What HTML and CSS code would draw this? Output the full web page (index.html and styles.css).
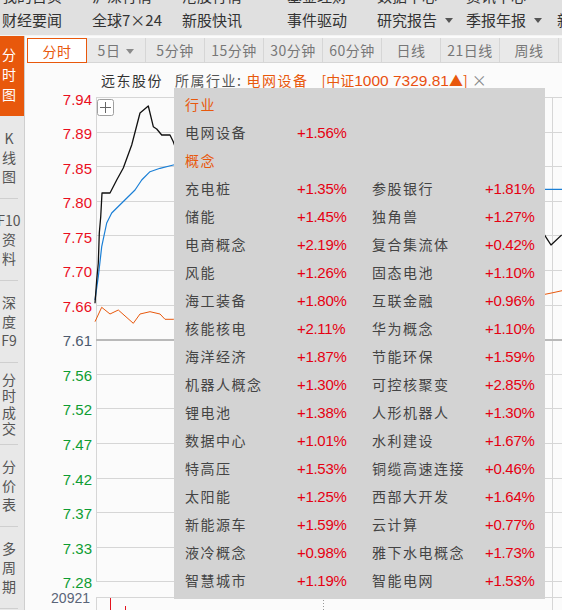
FILE: index.html
```html
<!DOCTYPE html>
<html lang="zh-CN">
<head>
<meta charset="utf-8">
<title>远东股份 分时图</title>
<link rel="stylesheet" href="styles.css">
</head>
<body>
<div class="app">
  <header class="topbar">
    <div class="toprow clipped">
      <span class="ti w90">我的首页</span>
      <span class="ti w90">沪深行情</span>
      <span class="ti w105">港股行情</span>
      <span class="ti w90">基金理财</span>
      <span class="ti w89">数据中心</span>
      <span class="ti w91">资讯中心</span>
      <span class="ti">个股</span>
    </div>
    <div class="toprow">
      <span class="ti w90">财经要闻</span>
      <span class="ti w90">全球7×24</span>
      <span class="ti w105">新股快讯</span>
      <span class="ti w90">事件驱动</span>
      <span class="ti w89">研究报告<i class="caret"></i></span>
      <span class="ti w91">季报年报<i class="caret"></i></span>
      <span class="ti">新闻</span>
    </div>
  </header>

  <div class="body">
    <nav class="side">
      <div class="sec active"><span>分</span><span>时</span><span>图</span></div>
      <div class="sec"><span>K</span><span>线</span><span>图</span></div>
      <div class="sec"><span>F10</span><span>资</span><span>料</span></div>
      <div class="sec"><span>深</span><span>度</span><span>F9</span></div>
      <div class="sec tight"><span>分</span><span>时</span><span>成</span><span>交</span></div>
      <div class="sec"><span>分</span><span>价</span><span>表</span></div>
      <div class="sec"><span>多</span><span>周</span><span>期</span></div>
    </nav>

    <main class="main">
      <div class="tabs">
        <div class="tab on">分时</div>
        <div class="tab">5日<i class="caret grey"></i></div>
        <div class="tab">5分钟</div>
        <div class="tab">15分钟</div>
        <div class="tab">30分钟</div>
        <div class="tab">60分钟</div>
        <div class="tab">日线</div>
        <div class="tab">21日线</div>
        <div class="tab">周线</div>
        <div class="tab">月线</div>
      </div>

      <div class="stockline">
        <span class="sname">远东股份</span><span class="lbl">所属行业:</span><span class="ind">电网设备</span><span class="idx">[中证<span class="num">1000 7329.81</span>▲]</span><span class="close">×</span>
      </div>

      <svg class="chart" width="537" height="516" viewBox="0 0 537 516">
        <g class="grid">
          <line x1="71" y1="3.5" x2="537" y2="3.5"/>
          <line x1="71" y1="38.5" x2="537" y2="38.5"/>
          <line x1="71" y1="72.5" x2="537" y2="72.5"/>
          <line x1="71" y1="107.5" x2="537" y2="107.5"/>
          <line x1="71" y1="141.5" x2="537" y2="141.5"/>
          <line x1="71" y1="176.5" x2="537" y2="176.5"/>
          <line x1="71" y1="211.5" x2="537" y2="211.5"/>
          <line x1="71" y1="280.5" x2="537" y2="280.5"/>
          <line x1="71" y1="314.5" x2="537" y2="314.5"/>
          <line x1="71" y1="349.5" x2="537" y2="349.5"/>
          <line x1="71" y1="384.5" x2="537" y2="384.5"/>
          <line x1="71" y1="418.5" x2="537" y2="418.5"/>
          <line x1="71" y1="453.5" x2="537" y2="453.5"/>
          <line x1="71" y1="487.5" x2="537" y2="487.5"/>
          <line x1="71" y1="503.5" x2="537" y2="503.5"/>
          <line x1="71.5" y1="3.5" x2="71.5" y2="487.5"/>
          <line x1="71.5" y1="503.5" x2="71.5" y2="516"/>
          <line x1="527.5" y1="3.5" x2="527.5" y2="516"/>
        </g>
        <line class="zero" x1="71" y1="246" x2="537" y2="246"/>
        <line class="dotted" x1="298.5" y1="506" x2="298.5" y2="516"/>

        <g class="ylab">
          <text class="up" x="67" y="11">7.94</text>
          <text class="up" x="67" y="45">7.89</text>
          <text class="up" x="67" y="80">7.85</text>
          <text class="up" x="67" y="114">7.80</text>
          <text class="up" x="67" y="149">7.75</text>
          <text class="up" x="67" y="183">7.70</text>
          <text class="up" x="67" y="218">7.66</text>
          <text class="flat" x="67" y="252">7.61</text>
          <text class="down" x="67" y="287">7.56</text>
          <text class="down" x="67" y="321">7.52</text>
          <text class="down" x="67" y="356">7.47</text>
          <text class="down" x="67" y="391">7.42</text>
          <text class="down" x="67" y="425">7.37</text>
          <text class="down" x="67" y="460">7.33</text>
          <text class="down" x="67" y="494">7.28</text>
          <text class="vol" x="65" y="509">20921</text>
        </g>

        <polyline class="ratio" points="70,227.7 76.7,213.3 85,220 93.3,216 108.3,229.3 115,220 125,217.7 135,220 140,225.3 148.3,225.3 160,224 200,222 260,218 330,212 400,206 470,203 520,200.3 528,198.7 537,196.7"/>
        <polyline class="avg" points="70,206 73.3,182.7 76.7,152.7 81.7,129 86.7,119 110,96 116.7,86 125,77.7 135,74.3 148.3,71 160,69 220,72 300,80 400,88 470,93 520,95.3 537,95.3"/>
        <polyline class="price" points="70,209.3 71.7,186 73.3,169 74.3,139 75.7,123 77,99 85,99 91.7,86 98.3,74 106.7,51 115,19 123.3,12 128.3,32.7 131.7,35 136.7,41 145,41 148.3,47.7 152,58 200,90 300,120 400,130 480,135 519,140 521.7,144.3 526,151 536.7,141"/>

        <line class="bar" x1="85.5" y1="504" x2="85.5" y2="516"/>
        <line class="bar" x1="100.5" y1="512" x2="100.5" y2="516"/>

        <g class="zoombtn">
          <rect x="72.5" y="5.5" width="16" height="16" rx="2"/>
          <line x1="75" y1="13.5" x2="86" y2="13.5"/>
          <line x1="80.5" y1="8" x2="80.5" y2="19"/>
        </g>
      </svg>
    </main>
  </div>

  <div class="popup">
    <div class="prow"><span class="ph">行业</span></div>
    <div class="prow"><span class="nm">电网设备</span><span class="pc">+1.56%</span></div>
    <div class="prow"><span class="ph">概念</span></div>
    <div class="prow"><span class="nm">充电桩</span><span class="pc">+1.35%</span><span class="nm">参股银行</span><span class="pc">+1.81%</span></div>
    <div class="prow"><span class="nm">储能</span><span class="pc">+1.45%</span><span class="nm">独角兽</span><span class="pc">+1.27%</span></div>
    <div class="prow"><span class="nm">电商概念</span><span class="pc">+2.19%</span><span class="nm">复合集流体</span><span class="pc">+0.42%</span></div>
    <div class="prow"><span class="nm">风能</span><span class="pc">+1.26%</span><span class="nm">固态电池</span><span class="pc">+1.10%</span></div>
    <div class="prow"><span class="nm">海工装备</span><span class="pc">+1.80%</span><span class="nm">互联金融</span><span class="pc">+0.96%</span></div>
    <div class="prow"><span class="nm">核能核电</span><span class="pc">+2.11%</span><span class="nm">华为概念</span><span class="pc">+1.10%</span></div>
    <div class="prow"><span class="nm">海洋经济</span><span class="pc">+1.87%</span><span class="nm">节能环保</span><span class="pc">+1.59%</span></div>
    <div class="prow"><span class="nm">机器人概念</span><span class="pc">+1.30%</span><span class="nm">可控核聚变</span><span class="pc">+2.85%</span></div>
    <div class="prow"><span class="nm">锂电池</span><span class="pc">+1.38%</span><span class="nm">人形机器人</span><span class="pc">+1.30%</span></div>
    <div class="prow"><span class="nm">数据中心</span><span class="pc">+1.01%</span><span class="nm">水利建设</span><span class="pc">+1.67%</span></div>
    <div class="prow"><span class="nm">特高压</span><span class="pc">+1.53%</span><span class="nm">铜缆高速连接</span><span class="pc">+0.46%</span></div>
    <div class="prow"><span class="nm">太阳能</span><span class="pc">+1.25%</span><span class="nm">西部大开发</span><span class="pc">+1.64%</span></div>
    <div class="prow"><span class="nm">新能源车</span><span class="pc">+1.59%</span><span class="nm">云计算</span><span class="pc">+0.77%</span></div>
    <div class="prow"><span class="nm">液冷概念</span><span class="pc">+0.98%</span><span class="nm">雅下水电概念</span><span class="pc">+1.73%</span></div>
    <div class="prow"><span class="nm">智慧城市</span><span class="pc">+1.19%</span><span class="nm">智能电网</span><span class="pc">+1.53%</span></div>
  </div>
</div>
</body>
</html>
```

FILE: styles.css
```css
html, body {
  margin: 0;
  padding: 0;
  width: 562px;
  height: 610px;
  overflow: hidden;
  background: #fbfbfb;
  font-family: "Noto Sans CJK SC", "Liberation Sans", sans-serif;
}

.app {
  position: relative;
  width: 562px;
  height: 610px;
  overflow: hidden;
}

/* ---------- top menu ---------- */
.topbar {
  height: 35px;
  background: #e0e0e0;
  border-bottom: 1px solid #f4f4f4;
  overflow: hidden;
}

.toprow {
  display: flex;
  height: 31px;
  align-items: center;
  padding-left: 2px;
  white-space: nowrap;
  font-size: 15px;
  color: #333;
}

.toprow.clipped {
  height: 4px;
  align-items: flex-end;
  overflow: hidden;
}

.toprow.clipped .ti {
  line-height: 20px;
  position: relative;
  top: 2px;
}

.ti {
  display: flex;
  align-items: center;
  flex: none;
}

.w89 { width: 89px; }
.w90 { width: 90px; }
.w91 { width: 91px; }
.w105 { width: 105px; }

.caret {
  display: inline-block;
  width: 0;
  height: 0;
  border-left: 4px solid transparent;
  border-right: 4px solid transparent;
  border-top: 5px solid #555;
  margin-left: 8px;
  margin-top: 2px;
}

.caret.grey {
  border-top-color: #8a8a8a;
  margin-left: 6px;
}

/* ---------- body ---------- */
.body {
  display: flex;
  height: 574px;
}

.side {
  width: 24px;
  flex: none;
  background: #e8e8e8;
  border-right: 1px solid #cfcfcf;
}

.sec {
  height: 81px;
  border-bottom: 1px solid #cfcfcf;
  display: flex;
  flex-direction: column;
  justify-content: center;
  width: 18px;
  align-items: center;
  font-size: 14px;
  line-height: 19px;
  color: #555;
}

.sec.tight {
  line-height: 16.5px;
}

.sec.active {
  width: 24px;
  height: 80px;
  background: #e8580c;
  color: #fff;
  justify-content: flex-start;
  align-items: flex-start;
  border-bottom: 1px solid #e8e8e8;
  line-height: 20px;
}

.sec.active span:first-child {
  margin-top: 8px;
}

.sec.active span {
  width: 18px;
  text-align: center;
}

.sec span {
  white-space: nowrap;
}

/* ---------- main ---------- */
.main {
  flex: 1;
  display: flex;
  flex-direction: column;
  background: #fbfbfb;
  min-width: 0;
}

.tabs {
  display: flex;
  height: 25px;
  margin-top: 2px;
  padding-left: 2px;
}

.tab {
  flex: none;
  width: 59px;
  box-sizing: border-box;
  background: #e9e9e9;
  border-right: 1px solid #d6d6d6;
  border-bottom: 1px solid #d6d6d6;
  color: #777;
  font-size: 14px;
  letter-spacing: 0.5px;
  display: flex;
  align-items: center;
  justify-content: center;
}

.tab.on {
  width: 60px;
  background: #fff;
  border: 1.5px solid #e8580c;
  color: #e8580c;
}

.stockline {
  height: 29px;
  padding-top: 2px;
  line-height: 29px;
  padding-left: 76px;
  font-size: 14px;
  letter-spacing: 1.5px;
  color: #333;
  white-space: nowrap;
}

.lbl {
  margin-left: 12px;
  color: #555;
}

.ind {
  margin-left: 4px;
  color: #e8580c;
}

.idx {
  margin-left: 13px;
  color: #e8580c;
  letter-spacing: 0;
}

.num {
  font-family: "Liberation Sans", sans-serif;
  font-size: 15.5px;
  color: #e9500f;
}

.close {
  margin-left: 4px;
  color: #888;
  font-size: 15px;
  letter-spacing: 0;
}

/* ---------- chart ---------- */
.chart {
  display: block;
  flex: none;
}

.grid line {
  stroke: #d6d6d6;
  stroke-width: 1;
}

.zero {
  stroke: #b9b9b9;
  stroke-width: 2;
}

.dotted {
  stroke: #999;
  stroke-width: 1;
  stroke-dasharray: 1 2;
}

.ylab text {
  font-family: "Liberation Sans", sans-serif;
  font-size: 15px;
  text-anchor: end;
}

.ylab .up { fill: #ea0f1e; }
.ylab .flat { fill: #4d5a6e; }
.ylab .down { fill: #0e9d32; }
.ylab .vol { fill: #5a6478; font-size: 14px; }

.price, .avg, .ratio {
  fill: none;
  stroke-linejoin: round;
}

.price { stroke: #111; stroke-width: 1.3; }
.avg { stroke: #1a7fd6; stroke-width: 1.2; }
.ratio { stroke: #e8580c; stroke-width: 1; }

.bar {
  stroke: #e4141e;
  stroke-width: 1;
}

.zoombtn rect {
  fill: #fff;
  stroke: #a0a0a0;
  stroke-width: 1;
}

.zoombtn line {
  stroke: #666;
  stroke-width: 1;
}

/* ---------- popup ---------- */
.popup {
  position: absolute;
  left: 174px;
  top: 88px;
  width: 371px;
  height: 511px;
  box-sizing: border-box;
  background: #d3d3d3;
  padding: 2px 0 0 11px;
}

.prow {
  display: grid;
  grid-template-columns: 112px 75px 113px 60px;
  height: 28px;
  align-items: center;
  white-space: nowrap;
}

.ph {
  font-size: 14px;
  letter-spacing: 1.5px;
  color: #e8580c;
}

.nm {
  font-size: 14px;
  letter-spacing: 1.5px;
  color: #444;
}

.pc {
  font-family: "Liberation Sans", sans-serif;
  font-size: 15px;
  letter-spacing: -0.3px;
  color: #e60012;
}
```
